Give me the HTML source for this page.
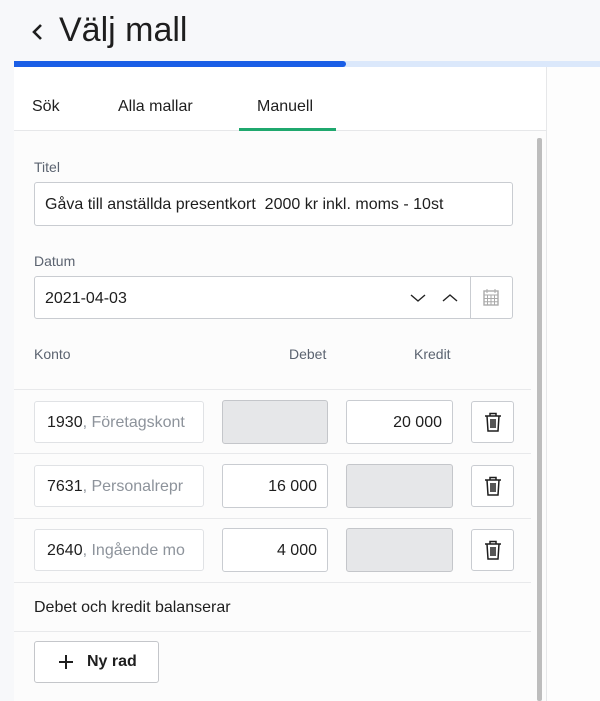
<!DOCTYPE html>
<html><head><meta charset="utf-8"><style>
*{box-sizing:border-box;margin:0;padding:0}
body{width:600px;height:701px;overflow:hidden;background:#f7f8fa;font-family:"Liberation Sans",sans-serif;color:#1e1e1e;position:relative}
.a{position:absolute}
.lbl{font-size:14px;color:#5b6370}
.inp{position:absolute;background:#fff;border:1px solid #c9ccd1;border-radius:3px;font-size:16px}
.dis{position:absolute;background:#e6e7e9;border:1px solid #c4c6ca;border-radius:3px}
.line{position:absolute;left:14px;width:517px;height:1px;background:#e8e9eb}
.tr{position:absolute;width:43px;height:42px;background:#fff;border:1px solid #c9ccd1;border-radius:3px;display:flex;align-items:center;justify-content:center}
</style></head><body>
<svg class="a" style="left:30px;top:21px" width="14" height="22" viewBox="0 0 14 22"><path d="M11 4L4 11l7 7" fill="none" stroke="#1e1e1e" stroke-width="2.6"/></svg>
<div class="a" style="left:59px;top:11px;font-size:34px;color:#1e1e1e">Välj mall</div>
<div class="a" style="left:14px;top:61px;width:586px;height:6px;background:#dbe8fb"></div>
<div class="a" style="left:14px;top:61px;width:332px;height:6px;background:#1a5ee6;border-radius:0 3px 3px 0"></div>
<div class="a" style="left:546px;top:67px;width:54px;height:634px;background:#fdfdfd;border-left:1px solid #e6e7e9"></div>
<div class="a" style="left:14px;top:67px;width:532px;height:634px;background:#fcfcfc"></div>
<div class="a" style="left:14px;top:67px;width:532px;height:64px;background:#fff;border-bottom:1px solid #e6e7e9"></div>
<div class="a" style="left:32px;top:98px;font-size:16px">Sök</div>
<div class="a" style="left:118px;top:98px;font-size:16px">Alla mallar</div>
<div class="a" style="left:257px;top:98px;font-size:16px">Manuell</div>
<div class="a" style="left:239px;top:128px;width:97px;height:3px;background:#1fa86e"></div>
<div class="a" style="left:537px;top:138px;width:5px;height:563px;background:#bdbdbd;border-radius:2px"></div>
<div class="a lbl" style="left:34px;top:159px">Titel</div>
<div class="inp" style="left:34px;top:182px;width:479px;height:44px;padding:13px 10px">Gåva till anställda presentkort&nbsp; 2000 kr inkl. moms - 10st</div>
<div class="a lbl" style="left:34px;top:253px">Datum</div>
<div class="inp" style="left:34px;top:276px;width:479px;height:43px;padding:13px 10px">2021-04-03</div>
<div class="a" style="left:470px;top:277px;width:1px;height:41px;background:#c9ccd1"></div>
<svg class="a" style="left:409px;top:292px" width="50" height="12"><path d="M2 3l7 6 7-6M34 9l7-6 7 6" fill="none" stroke="#222" stroke-width="1.4"/></svg>
<svg class="a" style="left:483px;top:289px" width="16" height="17" viewBox="0 0 16 17"><rect x="1" y="2" width="14" height="14" fill="none" stroke="#aaa" stroke-width="1.4"/><path d="M1 6h14M4 0v4M12 0v4M1 9.5h14M1 12.7h14M4.5 6v10M8 6v10M11.5 6v10" stroke="#aaa" stroke-width="1"/></svg>
<div class="a lbl" style="left:34px;top:346px">Konto</div>
<div class="a lbl" style="left:289px;top:346px">Debet</div>
<div class="a lbl" style="left:414px;top:346px">Kredit</div>
<div class="line" style="top:389px"></div>
<div class="line" style="top:453px"></div>
<div class="line" style="top:518px"></div>
<div class="line" style="top:582px"></div>
<div class="line" style="top:631px"></div>

<div class="inp" style="left:34px;top:401px;width:170px;height:42px;padding:12px 12px;border-color:#e0e2e5;white-space:nowrap;overflow:hidden">1930<span style="color:#8d939b">, Företagskont</span></div>
<div class="dis" style="left:222px;top:400px;width:106px;height:44px"></div>
<div class="inp" style="left:346px;top:400px;width:107px;height:44px;padding:13px 10px;text-align:right">20 000</div>
<div class="tr" style="left:471px;top:401px"><svg width="18" height="20" viewBox="0 0 18 20"><path d="M1 4h16M6 4V1.5h6V4M3 4l1 15h10l1-15M7 7v9M9 7v9M11 7v9" fill="none" stroke="#1e1e1e" stroke-width="1.5"/></svg></div>

<div class="inp" style="left:34px;top:465px;width:170px;height:42px;padding:12px 12px;border-color:#e0e2e5;white-space:nowrap;overflow:hidden">7631<span style="color:#8d939b">, Personalrepr</span></div>
<div class="inp" style="left:222px;top:464px;width:106px;height:44px;padding:13px 10px;text-align:right">16 000</div>
<div class="dis" style="left:346px;top:464px;width:107px;height:44px"></div>
<div class="tr" style="left:471px;top:465px"><svg width="18" height="20" viewBox="0 0 18 20"><path d="M1 4h16M6 4V1.5h6V4M3 4l1 15h10l1-15M7 7v9M9 7v9M11 7v9" fill="none" stroke="#1e1e1e" stroke-width="1.5"/></svg></div>

<div class="inp" style="left:34px;top:529px;width:170px;height:42px;padding:12px 12px;border-color:#e0e2e5;white-space:nowrap;overflow:hidden">2640<span style="color:#8d939b">, Ingående mo</span></div>
<div class="inp" style="left:222px;top:528px;width:106px;height:44px;padding:13px 10px;text-align:right">4 000</div>
<div class="dis" style="left:346px;top:528px;width:107px;height:44px"></div>
<div class="tr" style="left:471px;top:529px"><svg width="18" height="20" viewBox="0 0 18 20"><path d="M1 4h16M6 4V1.5h6V4M3 4l1 15h10l1-15M7 7v9M9 7v9M11 7v9" fill="none" stroke="#1e1e1e" stroke-width="1.5"/></svg></div>

<div class="a" style="left:34px;top:599px;font-size:16px">Debet och kredit balanserar</div>
<div class="a" style="left:34px;top:641px;width:125px;height:42px;background:#fff;border:1px solid #c4c6ca;border-radius:3px"></div>
<svg class="a" style="left:58px;top:654px" width="16" height="16"><path d="M8 1v14M1 8h14" stroke="#1e1e1e" stroke-width="2"/></svg>
<div class="a" style="left:87px;top:653px;font-size:16px;font-weight:bold;color:#1e1e1e">Ny rad</div>
</body></html>
